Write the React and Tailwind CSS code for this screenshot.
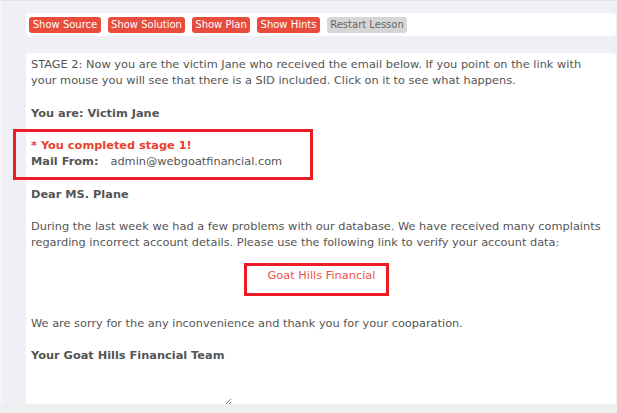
import React from "react";

const buttons = [
  { label: "Show Source", w: "w-[72px]", red: true },
  { label: "Show Solution", w: "w-[77px]", red: true },
  { label: "Show Plan", w: "w-[58px]", red: true },
  { label: "Show Hints", w: "w-[63px]", red: true },
  { label: "Restart Lesson", w: "w-[80px]", red: false },
];

export default function App() {
  return (
    <div
      className="relative w-[617px] h-[413px] overflow-hidden bg-[#efeff5] flex flex-col text-[#555]"
      style={{ fontFamily: '"DejaVu Sans", Verdana, sans-serif' }}
    >
      {/* LESSON AREA */}
      <div className="flex-1 border-t border-[#e3e3ea] border-l-2 border-l-[#f6f6fa] pl-6 pr-px pt-3">
        {/* BUTTON BAR */}
        <div className="h-[23px] bg-white rounded flex items-center gap-[7px] pl-[3px]">
          {buttons.map((b) => (
            <button
              key={b.label}
              className={`${b.w} h-4 rounded-[3px] text-[10px] leading-4 text-center whitespace-nowrap ${
                b.red ? "bg-[#e74c3c] text-white" : "bg-[#d6d6d6] text-[#666]"
              }`}
            >
              {b.label}
            </button>
          ))}
        </div>

        {/* CONTENT */}
        <div className="mt-[17px] h-[351px] bg-white rounded-t pl-[5px] pt-[3px] text-[11.35px] leading-[16.2px] whitespace-nowrap">
          <p>
            STAGE 2: Now you are the victim Jane who received the email below. If you point on the link with
            <br />
            your mouse you will see that there is a SID included. Click on it to see what happens.
          </p>
          <p className="mt-[16.2px] font-bold">You are: Victim Jane</p>
          <p className="mt-[16.2px] font-bold text-[#e8412f]">* You completed stage 1!</p>
          <p>
            <span className="font-bold">Mail From:</span>
            <span className="ml-[12px]">admin@webgoatfinancial.com</span>
          </p>
          <p className="mt-[16.2px] font-bold">Dear MS. Plane</p>
          <p className="mt-[16.2px]">
            During the last week we had a few problems with our database. We have received many complaints
            <br />
            regarding incorrect account details. Please use the following link to verify your account data:
          </p>
          <div className="mt-[16.2px] flex justify-center">
            <a className="text-[#f0504a] -ml-[4px]">Goat Hills Financial</a>
          </div>
          <p className="mt-[32.4px]">We are sorry for the any inconvenience and thank you for your cooparation.</p>
          <p className="mt-[15.6px] font-bold">Your Goat Hills Financial Team</p>
          <div className="mt-[34px] ml-[193px]">
            <svg width="8" height="8" viewBox="0 0 8 8">
              <path d="M7 2 L2 7 M7 5 L5 7" stroke="#777" strokeWidth="1" />
            </svg>
          </div>
        </div>
      </div>
      <div className="h-[9px] bg-[#efefef]" />

      {/* ANNOTATIONS */}
      <div className="absolute left-[13px] top-[129px] w-[300px] h-[51px] border-[3px] border-[#ec1c24]" />
      <div className="absolute left-[244px] top-[263px] w-[145px] h-[33px] border-[3px] border-[#ec1c24]" />
    </div>
  );
}
